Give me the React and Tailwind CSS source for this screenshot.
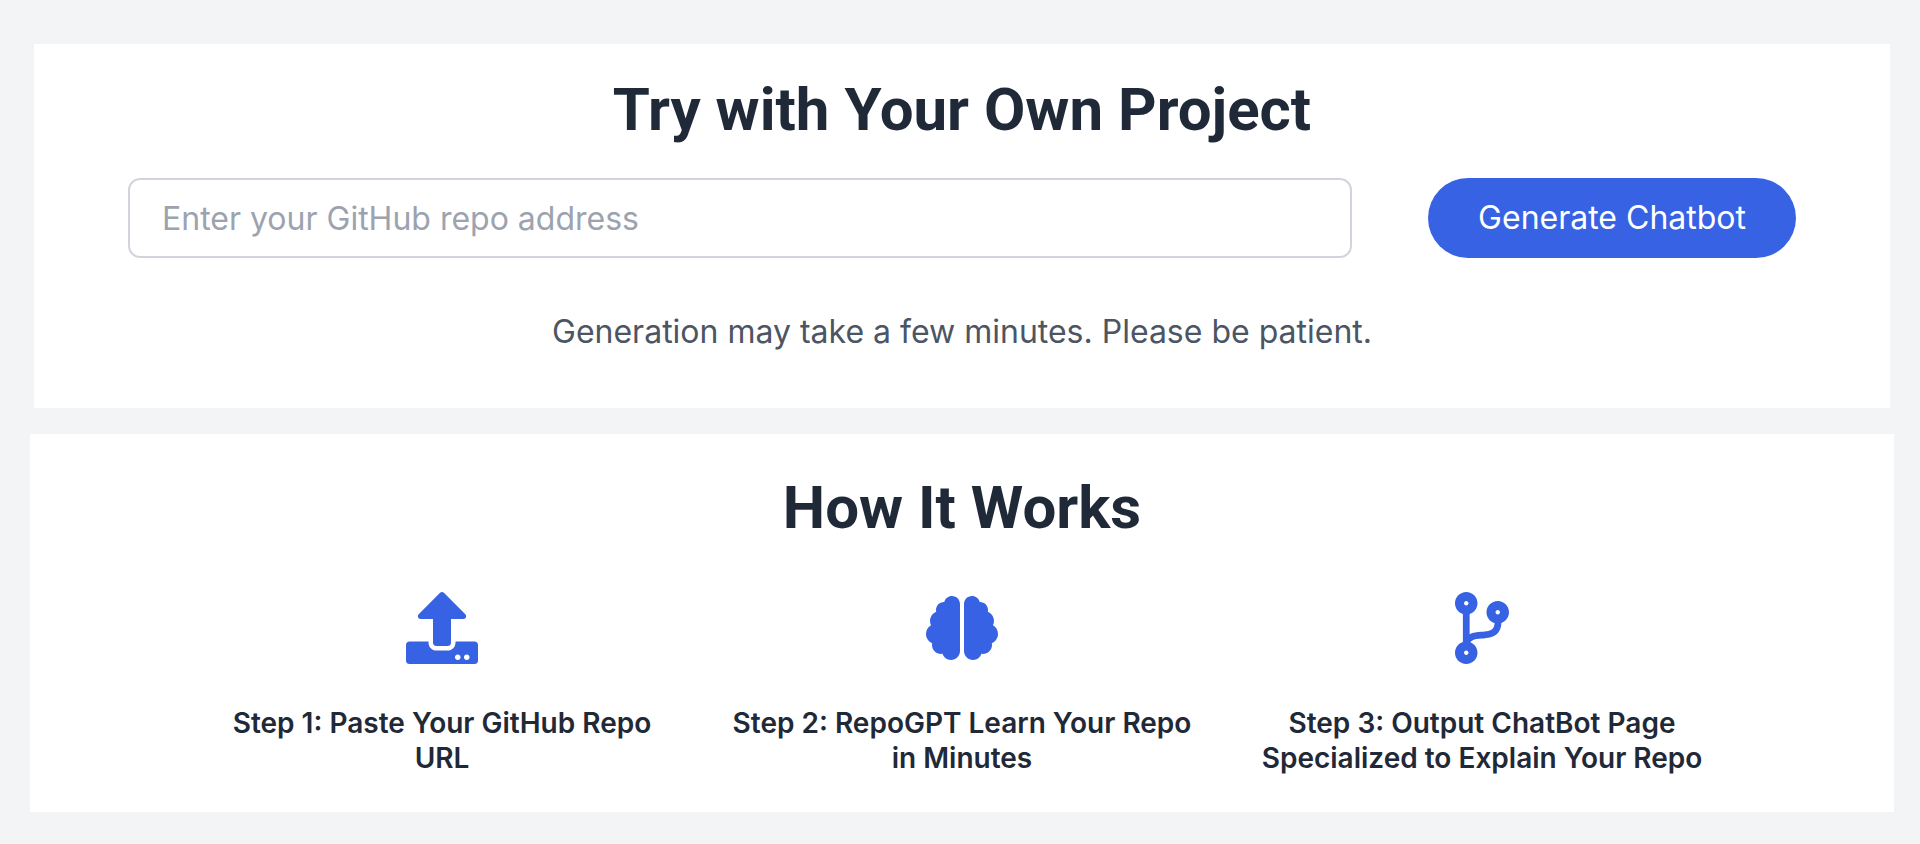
import { FaBrain, FaCodeBranch, FaUpload } from "react-icons/fa";

const steps = [
  { icon: FaUpload, title: "Step 1: Paste Your GitHub Repo URL" },
  { icon: FaBrain, title: "Step 2: RepoGPT Learn Your Repo in Minutes" },
  { icon: FaCodeBranch, title: "Step 3: Output ChatBot Page Specialized to Explain Your Repo" },
];

const SectionTitle = ({ children }) => (
  <h2 className="font-[Roboto,sans-serif] text-[60px] leading-[72px] font-bold text-center text-[#1f2937]">
    {children}
  </h2>
);

const TryProject = () => (
  <section className="mx-1 px-[94px] pt-[30px] pb-[52px] bg-white">
    <SectionTitle>Try with Your Own Project</SectionTitle>

    <form className="mt-8 flex items-center gap-[76px]" onSubmit={(e) => e.preventDefault()}>
      <input
        type="text"
        aria-label="GitHub repo address"
        placeholder="Enter your GitHub repo address"
        className="flex-1 min-w-0 h-20 px-8 text-[32px] text-[#1f2937] placeholder:text-[#9ca3af] border-2 border-[#d1d5db] rounded-xl"
      />
      <button
        type="submit"
        className="h-20 px-[50px] text-[32px] text-white bg-[#3762e3] hover:bg-blue-700 rounded-full"
      >
        Generate Chatbot
      </button>
    </form>

    <p className="mt-[50px] text-[32px] leading-[48px] text-center text-[#4b5563]">
      Generation may take a few minutes. Please be patient.
    </p>
  </section>
);

const HowItWorks = () => (
  <section className="pt-[38px] pb-9 bg-white">
    <SectionTitle>How It Works</SectionTitle>

    <div className="mt-12 mx-auto max-w-[1512px] grid grid-cols-3 gap-12">
      {steps.map(({ icon: Icon, title }) => (
        <div key={title} className="flex flex-col items-center text-center">
          <Icon className="size-[72px] text-[#3762e3]" />
          <h3 className="mt-[42px] text-[28px] leading-[35px] font-semibold text-[#1f2937]">{title}</h3>
        </div>
      ))}
    </div>
  </section>
);

export default function App() {
  return (
    <main className="min-h-screen pl-[30px] pr-[26px] pt-11 pb-8 flex flex-col gap-[26px] bg-[#f3f4f6] font-[Inter,sans-serif]">
      <TryProject />
      <HowItWorks />
    </main>
  );
}
